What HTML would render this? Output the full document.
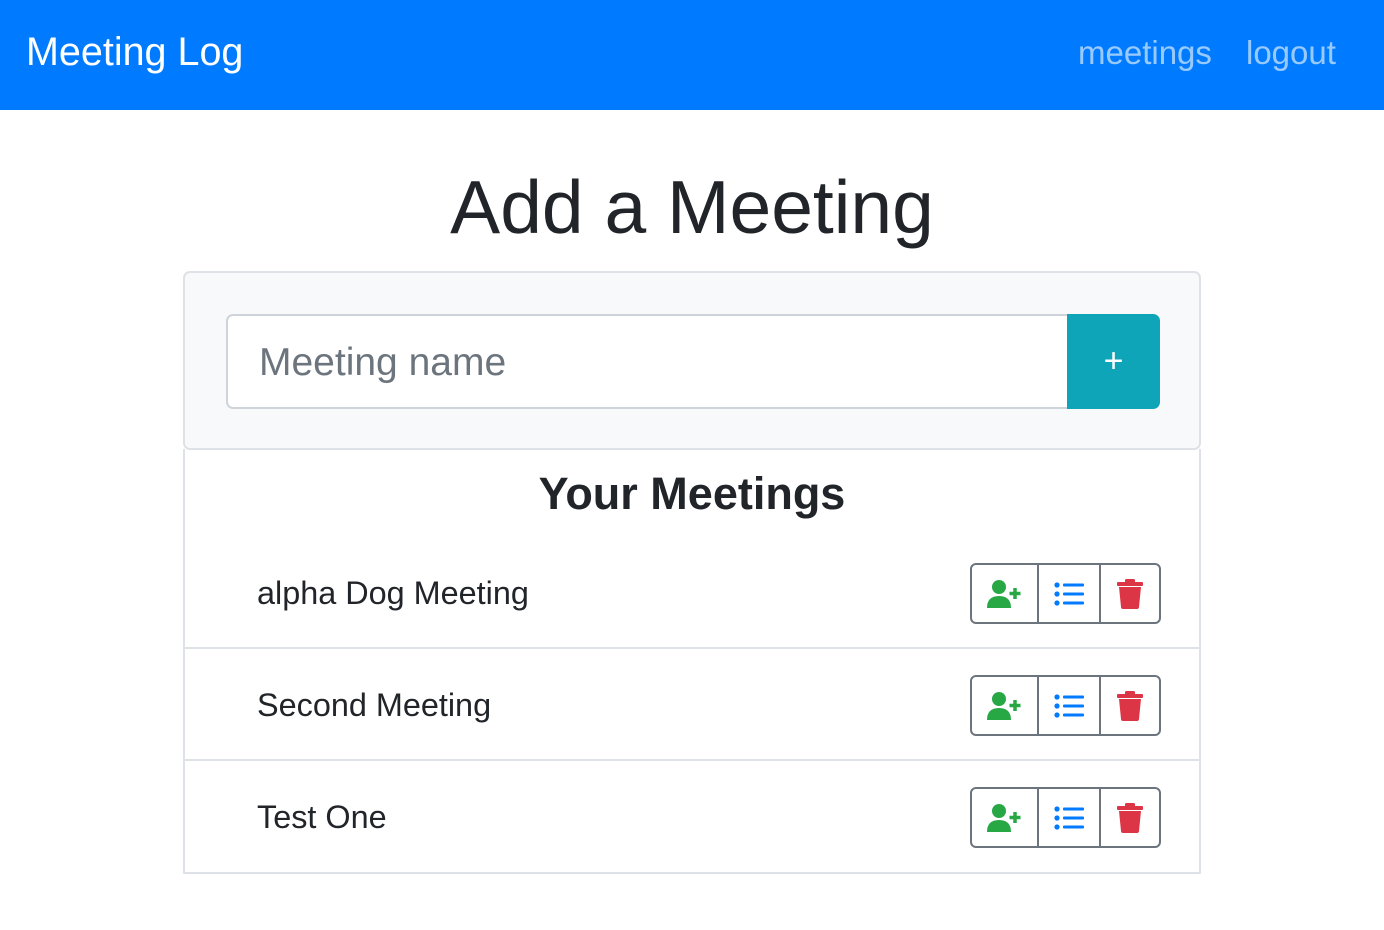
<!DOCTYPE html>
<html><head><style>
*{box-sizing:border-box;margin:0;padding:0}
body{width:1384px;height:930px;background:#fff;font-family:"Liberation Sans",sans-serif;color:#212529;position:relative;overflow:hidden}
.nav{position:absolute;left:0;top:0;width:1384px;height:110px;background:#007bff}
.brand{position:absolute;left:26px;top:30px;font-size:39.5px;color:#fff}
.lnk{position:absolute;top:34px;font-size:33px;color:rgba(255,255,255,.6)}
h1{position:absolute;left:0;width:1384px;top:170px;text-align:center;font-size:75px;font-weight:300;line-height:1}
.card{position:absolute;left:183px;top:271px;width:1018px;height:179px;background:#f8f9fa;border:2px solid #dee2e6;border-radius:7px}
.inp{position:absolute;left:41px;top:41px;width:842px;height:95px;background:#fff;border:2px solid #ced4da;border-right:none;border-radius:7px 0 0 7px;font-size:39px;color:#6c757d;padding:25px 0 0 31px}
.btn{position:absolute;left:882px;top:41px;width:93px;height:95px;background:#0ea5b8;border-radius:0 7px 7px 0;color:#fff;font-size:34px;text-align:center;line-height:95px}
.list{position:absolute;left:183px;top:449px;width:1018px;height:425px;border:2px solid #dee2e6;border-top:none}
h2{position:absolute;left:0;width:1014px;top:20px;text-align:center;font-size:45px;font-weight:bold;line-height:1.1}
.row{position:absolute;left:0;width:1014px;height:112px;border-bottom:2px solid #dee2e6}
.row:last-child{border-bottom:none}
.row span{position:absolute;left:72px;top:0;line-height:112px;font-size:32.4px}
.grp{position:absolute;left:785px;top:26px;width:191px;height:61px;border:2px solid #6c757d;border-radius:6px;display:flex;background:#fff}
.grp div{height:100%;display:flex;align-items:center;justify-content:center}
.a{width:67px;border-right:2px solid #6c757d}
.b{width:62px;border-right:2px solid #6c757d}
.c{width:58px}
</style></head><body>
<div class="nav"><div class="brand">Meeting Log</div><div class="lnk" style="left:1078px">meetings</div><div class="lnk" style="left:1246px">logout</div></div>
<h1>Add a Meeting</h1>
<div class="card"><div class="inp">Meeting name</div><div class="btn">+</div></div>
<div class="list"><h2>Your Meetings</h2>

<div class="row" style="top:88px"><span>alpha Dog Meeting</span>
<div class="grp">
<div class="a"><svg width="36" height="30" viewBox="0 0 36 30"><circle cx="12" cy="8" r="7" fill="#28a745"/><path d="M0 29 Q0 17 12 17 Q24 17 24 29 Z" fill="#28a745"/><path d="M28 9v11M22.5 14.5h11" stroke="#28a745" stroke-width="3.5"/></svg></div>
<div class="b"><svg width="30" height="24" viewBox="0 0 30 24"><g fill="#007bff"><circle cx="3" cy="3" r="2.6"/><circle cx="3" cy="12" r="2.6"/><circle cx="3" cy="21" r="2.6"/><rect x="9" y="1.5" width="21" height="3" rx="1"/><rect x="9" y="10.5" width="21" height="3" rx="1"/><rect x="9" y="19.5" width="21" height="3" rx="1"/></g></svg></div>
<div class="c"><svg width="26" height="30" viewBox="0 0 26 30"><g fill="#dc3545"><rect x="0" y="3" width="26" height="4" rx="1"/><rect x="8" y="0" width="10" height="4" rx="1.5"/><path d="M2 8h22l-2 20q-.2 2-2 2H6q-1.8 0-2-2Z"/></g></svg></div>
</div></div>

<div class="row" style="top:200px"><span>Second Meeting</span>
<div class="grp">
<div class="a"><svg width="36" height="30" viewBox="0 0 36 30"><circle cx="12" cy="8" r="7" fill="#28a745"/><path d="M0 29 Q0 17 12 17 Q24 17 24 29 Z" fill="#28a745"/><path d="M28 9v11M22.5 14.5h11" stroke="#28a745" stroke-width="3.5"/></svg></div>
<div class="b"><svg width="30" height="24" viewBox="0 0 30 24"><g fill="#007bff"><circle cx="3" cy="3" r="2.6"/><circle cx="3" cy="12" r="2.6"/><circle cx="3" cy="21" r="2.6"/><rect x="9" y="1.5" width="21" height="3" rx="1"/><rect x="9" y="10.5" width="21" height="3" rx="1"/><rect x="9" y="19.5" width="21" height="3" rx="1"/></g></svg></div>
<div class="c"><svg width="26" height="30" viewBox="0 0 26 30"><g fill="#dc3545"><rect x="0" y="3" width="26" height="4" rx="1"/><rect x="8" y="0" width="10" height="4" rx="1.5"/><path d="M2 8h22l-2 20q-.2 2-2 2H6q-1.8 0-2-2Z"/></g></svg></div>
</div></div>

<div class="row" style="top:312px"><span>Test One</span>
<div class="grp">
<div class="a"><svg width="36" height="30" viewBox="0 0 36 30"><circle cx="12" cy="8" r="7" fill="#28a745"/><path d="M0 29 Q0 17 12 17 Q24 17 24 29 Z" fill="#28a745"/><path d="M28 9v11M22.5 14.5h11" stroke="#28a745" stroke-width="3.5"/></svg></div>
<div class="b"><svg width="30" height="24" viewBox="0 0 30 24"><g fill="#007bff"><circle cx="3" cy="3" r="2.6"/><circle cx="3" cy="12" r="2.6"/><circle cx="3" cy="21" r="2.6"/><rect x="9" y="1.5" width="21" height="3" rx="1"/><rect x="9" y="10.5" width="21" height="3" rx="1"/><rect x="9" y="19.5" width="21" height="3" rx="1"/></g></svg></div>
<div class="c"><svg width="26" height="30" viewBox="0 0 26 30"><g fill="#dc3545"><rect x="0" y="3" width="26" height="4" rx="1"/><rect x="8" y="0" width="10" height="4" rx="1.5"/><path d="M2 8h22l-2 20q-.2 2-2 2H6q-1.8 0-2-2Z"/></g></svg></div>
</div></div>

</div>
</body></html>
